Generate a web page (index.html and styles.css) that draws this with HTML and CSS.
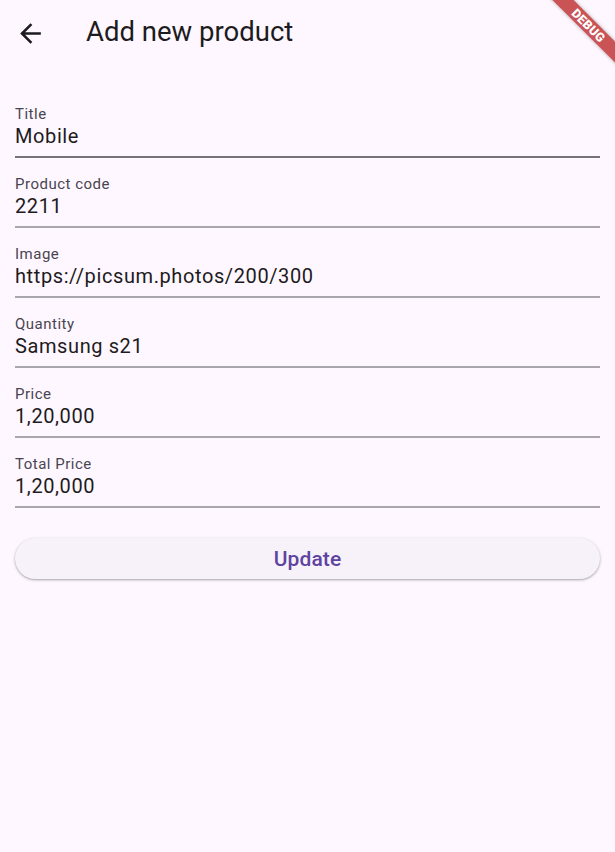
FILE: index.html
```html
<!DOCTYPE html>
<html>
<head>
<meta charset="utf-8">
<link rel="stylesheet" href="styles.css">
</head>
<body>
<div class="page">
  <header class="appbar">
    <svg class="back" viewBox="0 0 24 24" width="30" height="30"><path d="M20 11H7.83l5.59-5.59L12 4l-8 8 8 8 1.41-1.41L7.83 13H20v-2z" fill="#1d1b20"/></svg>
    <h1 class="title">Add new product</h1>
  </header>
  <form class="form">
    <div class="field field-focus">
      <div class="label">Title</div>
      <div class="value">Mobile</div>
    </div>
    <div class="field">
      <div class="label">Product code</div>
      <div class="value">2211</div>
    </div>
    <div class="field">
      <div class="label">Image</div>
      <div class="value">https://picsum.photos/200/300</div>
    </div>
    <div class="field">
      <div class="label">Quantity</div>
      <div class="value">Samsung s21</div>
    </div>
    <div class="field">
      <div class="label">Price</div>
      <div class="value">1,20,000</div>
    </div>
    <div class="field">
      <div class="label">Total Price</div>
      <div class="value">1,20,000</div>
    </div>
    <button type="button" class="update">Update</button>
  </form>
  <div class="banner">DEBUG</div>
</div>
</body>
</html>
```
FILE: styles.css
```css
html, body {
  margin: 0;
  padding: 0;
  background: #fef7ff;
}
body {
  font-family: Roboto, "Noto Sans", sans-serif;
  color: #1d1b20;
}
.page {
  position: relative;
  width: 615px;
  height: 852px;
  overflow: hidden;
  background: #fef7ff;
}
.appbar {
  height: 64px;
  display: flex;
  align-items: center;
  padding-left: 15px;
}
.back {
  display: block;
  width: 31px;
  height: 31px;
  margin-top: 2px;
}
.title {
  margin: 0 0 0 40px;
  font-size: 27.5px;
  font-weight: 400;
  line-height: 34px;
  color: #1d1b20;
}
.form {
  padding: 24px 15px 0 15px;
  display: flex;
  flex-direction: column;
}
.field {
  height: 70px;
  box-sizing: border-box;
  padding-top: 17px;
  border-bottom: 2px solid #aaa6ad;
}
.field-focus {
  border-bottom-color: #76727a;
}
.label {
  font-size: 15px;
  line-height: 18px;
  letter-spacing: 0.5px;
  color: #49454f;
}
.value {
  margin-top: 1px;
  font-size: 20px;
  line-height: 24px;
  letter-spacing: 0.6px;
  color: #1d1b20;
}
.update {
  margin-top: 30px;
  height: 41px;
  border: none;
  border-radius: 20.5px;
  background: #f7f2fa;
  color: #5e43a0;
  font-family: Roboto, "Noto Sans", sans-serif;
  font-size: 21px;
  font-weight: 500;
  letter-spacing: 0.1px;
  box-shadow: 0 1px 2px rgba(0,0,0,0.25), 0 1px 3px 1px rgba(0,0,0,0.08);
  padding: 0;
}
.banner {
  position: absolute;
  left: 528px;
  top: 18px;
  width: 121px;
  height: 15px;
  transform: rotate(45deg);
  background: rgba(183, 28, 28, 0.75);
  color: #fff;
  font-family: Roboto, "Noto Sans", sans-serif;
  font-size: 12.5px;
  font-weight: 900;
  line-height: 15px;
  text-align: center;
  letter-spacing: 0.3px;
  box-shadow: 0 0 4px rgba(0,0,0,0.3);
}
```
